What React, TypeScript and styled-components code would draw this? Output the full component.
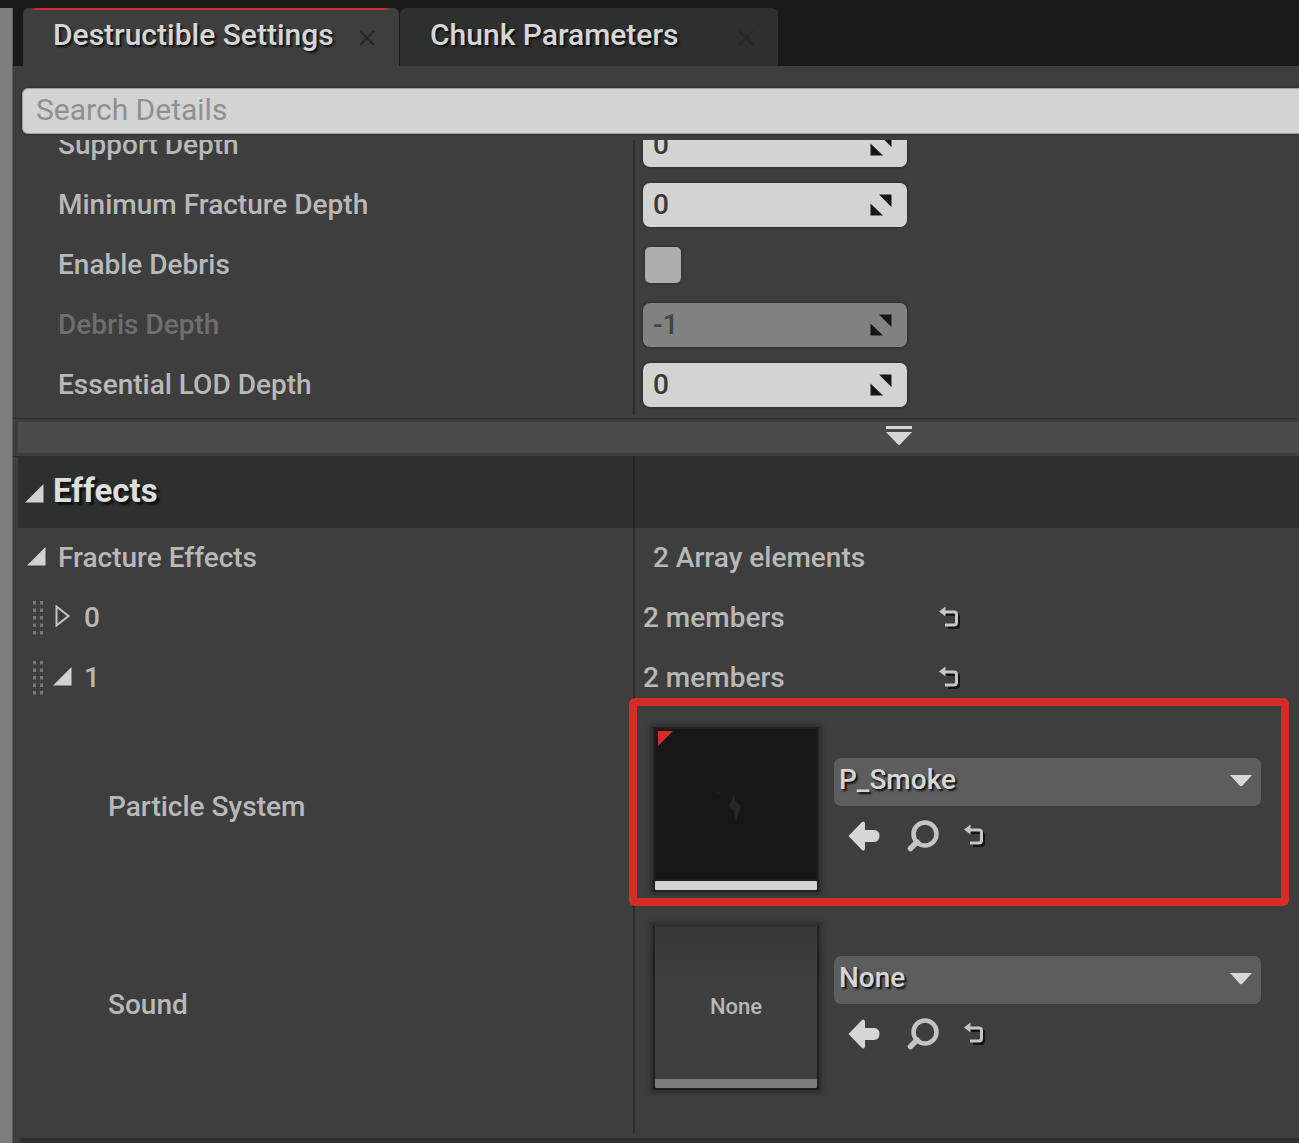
import React from "react";
import styled, { createGlobalStyle, css } from "styled-components";

const color = {
  strip: "#1a1a1a",
  panel: "#3e3e3e",
  header: "#2e302f",
  line: "#2c2e2d",
  field: "#d3d3d3",
  text: "#b8b8b8",
  bright: "#d6d6d6",
  mark: "#d42d26",
};

const GlobalStyle = createGlobalStyle`
  * { box-sizing: border-box; }
  body {
    margin: 0;
    background: ${color.panel};
    color: ${color.text};
    font-family: Roboto, "Liberation Sans", sans-serif;
    font-size: 28px;
    font-weight: 500;
    line-height: 32px;
  }
  button, input, select { font: inherit; color: inherit; }
`;

const Window = styled.div`
  display: flex;
  flex-direction: column;
  min-height: 100vh;
  overflow: hidden;
`;

const TabStrip = styled.div`
  display: flex;
  align-items: flex-end;
  background: ${color.strip};
  padding-top: 8px;
`;

const GutterCap = styled.div`
  align-self: stretch;
  width: 13px;
  margin-right: 10px;
  background: #7d7d7d;
  border-right: 1px solid #5c5c5c;
`;

const Tab = styled.div<{ $active?: boolean }>`
  display: flex;
  align-items: center;
  justify-content: space-between;
  height: 58px;
  width: ${(p) => (p.$active ? 376 : 378)}px;
  padding: 0 22px 4px 30px;
  margin-right: 1px;
  border-radius: 6px 6px 0 0;
  background: ${(p) => (p.$active ? color.panel : color.header)};
  ${(p) =>
    p.$active &&
    css`
      background-image: linear-gradient(90deg, transparent 8px, ${color.mark} 14px, ${color.mark} calc(100% - 14px), transparent calc(100% - 8px));
      background-size: 100% 2px;
      background-repeat: no-repeat;
    `}
`;

const TabTitle = styled.button`
  padding: 0;
  border: 0;
  background: none;
  color: ${color.bright};
  font-size: 30px;
  line-height: 38px;
  text-shadow: 2px 2px 2px #101010;
  white-space: nowrap;
`;

const IconButton = styled.button`
  display: flex;
  align-items: center;
  justify-content: center;
  flex: none;
  padding: 0;
  border: 0;
  background: none;
  svg { display: block; }
`;

const TabClose = styled(IconButton)`
  width: 20px;
  height: 20px;
  margin-top: 6px;
`;

const Body = styled.div`
  display: flex;
  flex: 1;
`;

const Gutter = styled.div`
  flex: none;
  width: 13px;
  background: #7d7d7d;
  border-right: 1px solid #5c5c5c;
`;

const Panel = styled.main`
  display: flex;
  flex-direction: column;
  flex: 1;
  min-width: 0;
  padding-top: 22px;
`;

const Search = styled.input`
  height: 46px;
  margin: 0 0 6px 9px;
  padding: 0 13px 4px;
  border: 1px solid #a0a0a0;
  border-right: 0;
  border-radius: 6px 0 0 6px;
  background: ${color.field};
  box-shadow: 0 0 2px 1px #303030;
  font-size: 30px;
  font-weight: 400;
  outline: 0;
  &::placeholder { color: #909090; opacity: 1; }
`;

const Scroller = styled.div`
  display: flex;
  flex-direction: column;
  flex: 1;
  overflow: hidden;
`;

const ScrolledList = styled.div`
  margin-top: -25px;
`;

const Row = styled.div<{ $tall?: boolean }>`
  display: grid;
  grid-template-columns: minmax(0, 620fr) minmax(0, 666fr);
  height: ${(p) => (p.$tall ? 198 : 60)}px;
`;

const NameCell = styled.div<{ $indent?: number; $dim?: boolean }>`
  display: flex;
  align-items: center;
  padding-left: ${(p) => p.$indent ?? 45}px;
  color: ${(p) => (p.$dim ? "#6e6e6e" : color.text)};
  white-space: nowrap;
`;

const ValueCell = styled.div<{ $indent?: number }>`
  position: relative;
  display: flex;
  align-items: center;
  padding-left: ${(p) => p.$indent ?? 8}px;
  border-left: 2px solid ${color.line};
  white-space: nowrap;
`;

const SpinBox = styled.div<{ $dim?: boolean }>`
  display: flex;
  align-items: center;
  width: 264px;
  height: 44px;
  padding: 0 15px 0 10px;
  border-radius: 7px;
  background: ${(p) => (p.$dim ? "#818181" : color.field)};
  box-shadow: 0 0 2px 1px #303030;
  color: ${(p) => (p.$dim ? "#444" : "#3a3a3a")};
`;

const SpinInput = styled.input`
  flex: 1;
  min-width: 0;
  padding: 0;
  border: 0;
  outline: 0;
  background: none;
`;

const CheckBox = styled.input`
  appearance: none;
  width: 36px;
  height: 36px;
  margin: 0 0 0 2px;
  border-radius: 5px;
  background: #adadad;
  box-shadow: 0 0 2px 1px #333;
`;

const MoreBar = styled.button`
  display: grid;
  grid-template-columns: minmax(0, 40fr) minmax(0, 26fr);
  align-items: center;
  flex: none;
  height: 37px;
  margin-top: 4px;
  padding: 0 0 3px;
  border: 4px solid ${color.panel};
  border-width: 3px 0 3px 5px;
  outline: 1px solid ${color.header};
  background: #4b4b4b;
  svg { grid-column: 2; margin-left: 92px; }
`;

const SectionHeader = styled.header`
  display: flex;
  flex: none;
  margin-left: 5px;
  background: ${color.header};
`;

const SectionGrid = styled.div`
  display: grid;
  grid-template-columns: minmax(0, 615fr) minmax(0, 666fr);
  flex: 1;
  height: 72px;
`;

const SectionName = styled.h2`
  display: flex;
  align-items: center;
  gap: 9px;
  margin: 0;
  padding: 0 0 2px 7px;
  color: #dedede;
  font-size: 33px;
  font-weight: 700;
  text-shadow: 3px 3px 2px #101010;
  svg { margin-top: 4px; }
`;

const SectionValue = styled.div`
  border-left: 2px solid #232424;
`;

const Expander = styled(IconButton)<{ $gap?: number }>`
  width: 19px;
  height: 20px;
  margin: 0 ${(p) => p.$gap ?? 12}px 4px 0;
`;

const Grip = styled.svg`
  flex: none;
  margin-right: 8px;
`;

const MemberCount = styled.span`
  width: 296px;
`;

const AssetCell = styled(ValueCell)`
  align-items: flex-start;
  gap: 15px;
  padding: 19px 38px 0 18px;
`;

const Thumb = styled.div<{ $empty?: boolean }>`
  position: relative;
  display: flex;
  flex: none;
  align-items: center;
  justify-content: center;
  width: 166px;
  height: 165px;
  padding-bottom: 4px;
  border: 2px solid #1f2020;
  border-top-color: ${(p) => (p.$empty ? "#303131" : "#1f2020")};
  border-bottom: 0;
  background: ${(p) => (p.$empty ? "linear-gradient(#383838, #3f3f3f 40%)" : "#171717")};
  box-shadow: 0 0 4px 3px #2d2f2e;
  font-size: 22px;
  &::after {
    content: "";
    position: absolute;
    left: 0;
    right: 0;
    bottom: 2px;
    height: 9px;
    border-radius: 1px;
    background: ${(p) => (p.$empty ? "#7b7b7b" : "#d3d3d3")};
    box-shadow: 0 0 0 2px #1d1e1e;
    clip-path: ${(p) => (p.$empty ? "inset(0 0 -2px 0)" : "none")};
  }
`;

const DirtyFlag = styled.svg`
  position: absolute;
  left: 3px;
  top: 2px;
`;

const AssetControls = styled.div`
  flex: 1;
  min-width: 0;
  padding-top: 31px;
`;

const SelectBox = styled.div`
  position: relative;
  svg {
    position: absolute;
    right: 9px;
    top: 17px;
    pointer-events: none;
  }
`;

const AssetSelect = styled.select`
  appearance: none;
  display: block;
  width: 100%;
  height: 48px;
  padding: 0 40px 4px 5px;
  border: 0;
  border-radius: 7px;
  background: #5d5d5d;
  color: ${color.bright};
  text-shadow: 2px 2px 2px #101010;
`;

const Actions = styled.div`
  display: flex;
  align-items: center;
  gap: 25px;
  height: 34px;
  margin-top: 13px;
  padding-left: 14px;
`;

const Highlight = styled.div`
  position: absolute;
  inset: -10px 10px 0 -6px;
  border: 8px solid ${color.mark};
  border-radius: 6px;
  pointer-events: none;
`;

const Filler = styled(Row)`
  flex: 1;
  height: auto;
  min-height: 28px;
  margin-bottom: 5px;
`;

const NextHeader = styled.div`
  flex: none;
  height: 5px;
  margin-left: 7px;
  background: ${color.header};
`;

const CloseIcon = () => (
  <svg width="16" height="16" viewBox="0 0 16 16" stroke="#272828" strokeWidth="2">
    <path d="M1 1 15 15M15 1 1 15" />
  </svg>
);

const SpinIcon = () => (
  <svg width="22" height="22" viewBox="0 0 22 22" fill="#161616" aria-hidden="true">
    <path d="M9 0.5H21.500V13ZM0.500 9.500V21.500H13Z" />
  </svg>
);

const OpenArrow = () => (
  <svg width="19" height="19" viewBox="0 0 19 19" fill="#d2d2d2">
    <path d="M18.500 0V18.500H0Z" />
  </svg>
);

const ClosedArrow = () => (
  <svg width="16" height="22" viewBox="0 0 16 22" fill="none" stroke="#c4c4c4" strokeWidth="2">
    <path d="M1.500 1.500V20.500L13.500 11Z" />
  </svg>
);

const GripIcon = () => (
  <Grip width="13" height="34" viewBox="0 0 13 34" fill="#777" aria-hidden="true">
    {[0, 1, 2, 3, 4].map((i) => (
      <React.Fragment key={i}>
        <rect x="1" y={i * 7.5} width="3" height="3.500" />
        <rect x="8" y={i * 7.5} width="3" height="3.500" />
      </React.Fragment>
    ))}
  </Grip>
);

const ResetIcon = () => (
  <svg width="24" height="24" viewBox="0 0 24 24" fill="none">
    <g stroke="#141414" transform="translate(2 2)">
      <path d="M4 6.500H15Q17.500 6.500 17.500 9V17Q17.500 19.500 15 19.500H7" strokeWidth="3" />
    </g>
    <path d="M4 6H15Q17.500 6 17.500 8.500V16.500Q17.500 19 15 19H6" stroke="#c6c6c6" strokeWidth="3" />
    <path d="M0 5.500 6.500 0.500V10.500Z" fill="#c6c6c6" />
  </svg>
);

const UseIcon = () => (
  <svg width="32" height="32" viewBox="0 0 32 32" fill="#d6d6d6">
    <path d="M0.500 16 14 2Q16 0.500 17 3V10H26Q31.500 10.500 31.500 16T26 22H17V29Q16 31.500 14 30Z" />
  </svg>
);

const BrowseIcon = () => (
  <svg width="34" height="32" viewBox="-2 0 34 32" fill="none" stroke="#c4c4c4">
    <circle cx="18" cy="14" r="11.500" strokeWidth="4.500" />
    <path d="M10 22 3.500 28.500" strokeWidth="5.500" strokeLinecap="round" />
  </svg>
);

const Caret = () => (
  <svg width="22" height="12" viewBox="0 0 22 12" fill="#d8d8d8" aria-hidden="true">
    <path d="M0 0H22L12.500 10.500Q11 12 9.500 10.500Z" />
  </svg>
);

const MoreIcon = () => (
  <svg width="26" height="20" viewBox="0 0 26 20" fill="#d6d6d6">
    <path d="M0 0H26V3H0ZM0 6H26L14 18.500Q13 19.500 12 18.500Z" />
  </svg>
);

const SmokeWisp = () => (
  <svg width="40" height="40" viewBox="0 0 40 40" fill="#282828" aria-hidden="true">
    <path d="M18 4 19 11 21 14 25 17 23 22 20 32 18 22 13 17 16 11ZM1 2 5 6 1 4Z" />
  </svg>
);

type NumberRowProps = { id: string; label: string; value: string; dim?: boolean };

const NumberRow = ({ id, label, value, dim }: NumberRowProps) => (
  <Row>
    <NameCell $dim={dim}>
      <label htmlFor={id}>{label}</label>
    </NameCell>
    <ValueCell>
      <SpinBox $dim={dim}>
        <SpinInput id={id} defaultValue={value} disabled={dim} />
        <SpinIcon />
      </SpinBox>
    </ValueCell>
  </Row>
);

const ResetButton = () => (
  <IconButton aria-label="Reset to default">
    <ResetIcon />
  </IconButton>
);

const MemberRow = ({ index, open }: { index: string; open?: boolean }) => (
  <Row>
    <NameCell $indent={19}>
      <GripIcon />
      <Expander aria-label={`Element ${index}`}>{open ? <OpenArrow /> : <ClosedArrow />}</Expander>
      {index}
    </NameCell>
    <ValueCell>
      <MemberCount>2 members</MemberCount>
      <ResetButton />
    </ValueCell>
  </Row>
);

type AssetRowProps = { id: string; label: string; value: string; empty?: boolean; marked?: boolean };

const AssetRow = ({ id, label, value, empty, marked }: AssetRowProps) => (
  <Row $tall>
    <NameCell $indent={95}>
      <label htmlFor={id}>{label}</label>
    </NameCell>
    <AssetCell>
      <Thumb $empty={empty}>
        {empty ? (
          "None"
        ) : (
          <>
            <DirtyFlag width="15" height="15" viewBox="0 0 15 15" fill={color.mark}>
              <path d="M0 0H15L0 15Z" />
            </DirtyFlag>
            <SmokeWisp />
          </>
        )}
      </Thumb>
      <AssetControls>
        <SelectBox>
          <AssetSelect id={id}>
            <option>{value}</option>
          </AssetSelect>
          <Caret />
        </SelectBox>
        <Actions>
          <IconButton aria-label="Use selected asset"><UseIcon /></IconButton>
          <IconButton aria-label="Browse to asset"><BrowseIcon /></IconButton>
          <ResetButton />
        </Actions>
      </AssetControls>
      {marked && <Highlight />}
    </AssetCell>
  </Row>
);

export default function App() {
  return (
    <Window>
      <GlobalStyle />
      <TabStrip>
        <GutterCap />
        <Tab $active>
          <TabTitle>Destructible Settings</TabTitle>
          <TabClose aria-label="Close Destructible Settings"><CloseIcon /></TabClose>
        </Tab>
        <Tab>
          <TabTitle>Chunk Parameters</TabTitle>
          <TabClose aria-label="Close Chunk Parameters"><CloseIcon /></TabClose>
        </Tab>
      </TabStrip>
      <Body>
        <Gutter />
        <Panel>
          <Search placeholder="Search Details" aria-label="Search Details" />
          <Scroller>
            <ScrolledList>
              <NumberRow id="support" label="Support Depth" value="0" />
              <NumberRow id="fracture" label="Minimum Fracture Depth" value="0" />
              <Row>
                <NameCell>
                  <label htmlFor="debris">Enable Debris</label>
                </NameCell>
                <ValueCell>
                  <CheckBox id="debris" type="checkbox" />
                </ValueCell>
              </Row>
              <NumberRow id="debris-depth" label="Debris Depth" value="-1" dim />
              <NumberRow id="lod" label="Essential LOD Depth" value="0" />
            </ScrolledList>
            <MoreBar aria-label="Show advanced">
              <MoreIcon />
            </MoreBar>
            <SectionHeader>
              <SectionGrid>
                <SectionName>
                  <OpenArrow />
                  Effects
                </SectionName>
                <SectionValue />
              </SectionGrid>
            </SectionHeader>
            <Row>
              <NameCell $indent={14}>
                <Expander aria-label="Fracture Effects"><OpenArrow /></Expander>
                Fracture Effects
              </NameCell>
              <ValueCell $indent={18}>2 Array elements</ValueCell>
            </Row>
            <MemberRow index="0" />
            <MemberRow index="1" open />
            <AssetRow id="particle" label="Particle System" value="P_Smoke" marked />
            <AssetRow id="sound" label="Sound" value="None" empty />
            <Filler>
              <NameCell />
              <ValueCell />
            </Filler>
            <NextHeader />
          </Scroller>
        </Panel>
      </Body>
    </Window>
  );
}
